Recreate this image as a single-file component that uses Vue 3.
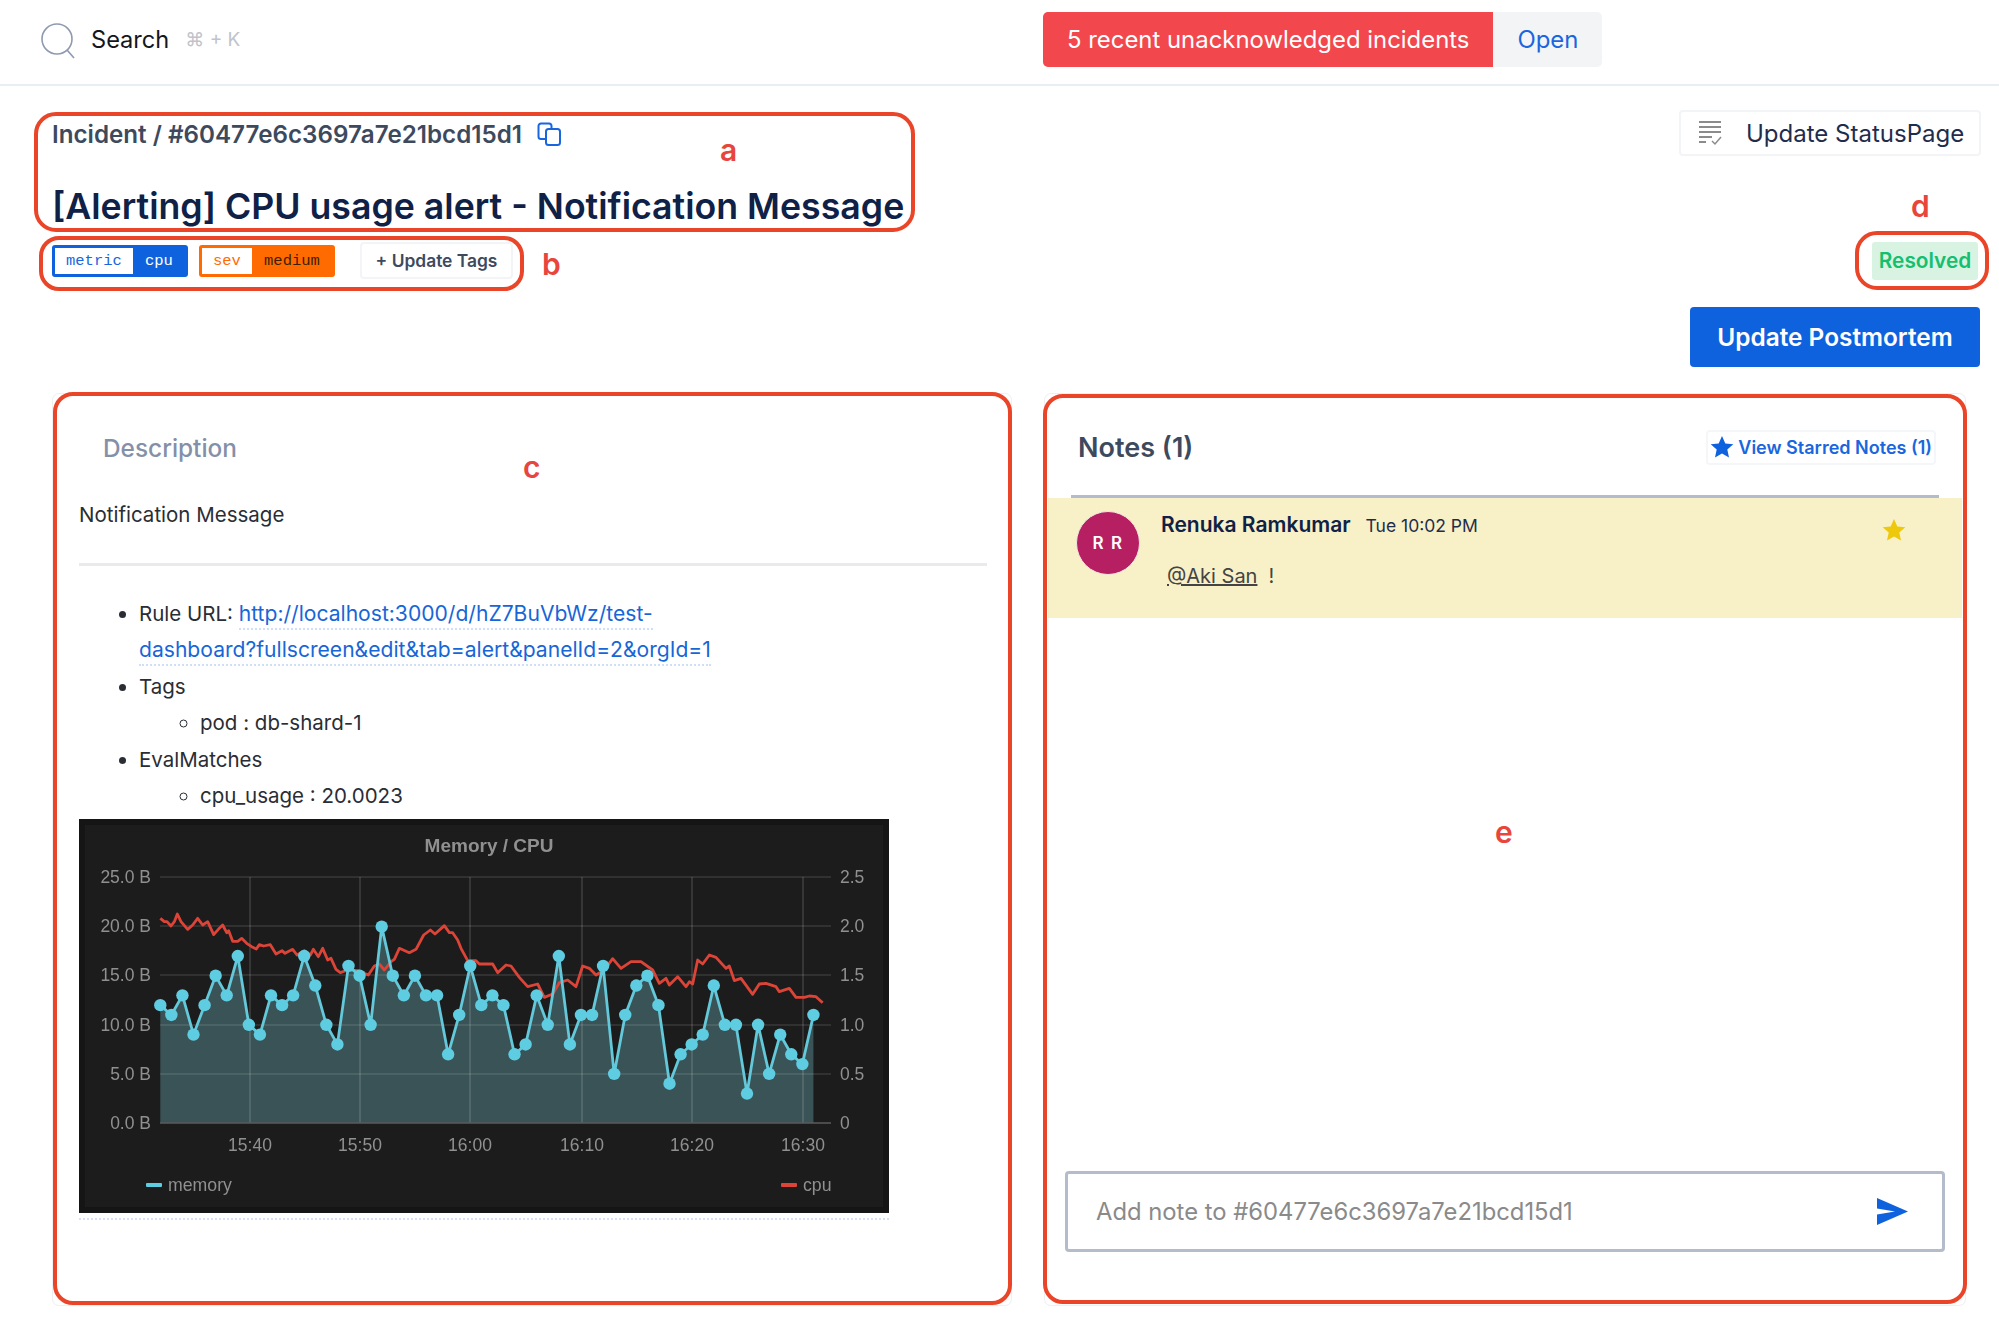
<template>
  <div class="page">
    <header class="topbar">
      <div class="search">
        <svg class="search-icon" width="36" height="36" viewBox="0 0 36 36" fill="none" stroke="#8f9ab0" stroke-width="1.6">
          <circle cx="17" cy="16" r="15" />
          <path d="M27 27l7 8" />
        </svg>
        <span class="search-label">Search</span>
        <span class="search-key">⌘ + K</span>
      </div>
      <div class="alert">
        <span class="alert-text">5 recent unacknowledged incidents</span>
        <span class="alert-open">Open</span>
      </div>
    </header>

    <section class="head">
      <div class="head-left">
        <div class="crumb">
          <span>Incident / #60477e6c3697a7e21bcd15d1</span>
          <svg width="25" height="24" viewBox="0 0 25 24" fill="none" stroke="#1a66de" stroke-width="2">
            <rect x="9" y="7" width="14" height="16" rx="2.5" />
            <path d="M9 17H4a2.500 2.500 0 0 1-2.500-2.500V4A2.500 2.500 0 0 1 4 1.500h8A2.500 2.500 0 0 1 14.500 4v3" />
          </svg>
        </div>
        <h1 class="title">[Alerting] CPU usage alert - Notification Message</h1>
        <div class="tags">
          <span v-for="tag in tags" :key="tag.name" class="tag" :class="tag.kind">
            <span class="tag-name">{{ tag.name }}</span>
            <span class="tag-value">{{ tag.value }}</span>
          </span>
          <button class="tag-btn">+ Update Tags</button>
        </div>
      </div>
      <div class="head-right">
        <button class="status-btn">
          <svg width="24" height="26" viewBox="0 0 24 26" fill="none" stroke="#8b8b8b" stroke-width="2">
            <path d="M1 2h22M1 7h22M1 12h22M1 17h13M1 22h7" />
            <path d="M14 21l3 3 6-7" stroke-width="1.500" />
          </svg>
          Update StatusPage
        </button>
        <span class="resolved">Resolved</span>
        <button class="post-btn">Update Postmortem</button>
      </div>
    </section>

    <main class="panels">
      <section class="card desc">
        <h2 class="desc-title">Description</h2>
        <p class="desc-msg">Notification Message</p>
        <hr class="desc-rule" />
        <ul class="list">
          <li>Rule URL: <a class="link">http://localhost:3000/d/hZ7BuVbWz/test-</a><br /><a class="link">dashboard?fullscreen&amp;edit&amp;tab=alert&amp;panelId=2&amp;orgId=1</a></li>
          <li>Tags
            <ul><li>pod : db-shard-1</li></ul>
          </li>
          <li>EvalMatches
            <ul><li>cpu_usage : 20.0023</li></ul>
          </li>
        </ul>
        <div class="chart-link">
          <svg class="chart" width="810" height="394" viewBox="0 0 810 394" font-family="'Liberation Sans', Arial, sans-serif" font-size="17.500" fill="#909090">
            <rect width="810" height="394" fill="#151515" />
            <rect x="6" y="6" width="798" height="382" fill="#1c1c1c" />
            <text x="410" y="33" text-anchor="middle" font-size="19" font-weight="700">Memory / CPU</text>

            <path :d="areaPath" fill="#3a5357" />
            <line v-for="g in hGrid" :key="g.y" x1="81" x2="752" :y1="g.y" :y2="g.y" stroke="#fff" stroke-opacity=".13" stroke-width="1.500" />
            <line v-for="t in xTicks" :key="t.label" :x1="t.x" :x2="t.x" y1="58" y2="304" stroke="#fff" stroke-opacity=".16" stroke-width="1.500" />
            <line x1="81" x2="752" y1="304" y2="304" stroke="#555" stroke-width="1.500" />

            <text v-for="g in hGrid" :key="'l' + g.y" x="72" :y="g.y + 6" text-anchor="end">{{ g.left }}</text>
            <text v-for="g in hGrid" :key="'r' + g.y" x="761" :y="g.y + 6">{{ g.right }}</text>
            <text v-for="t in xTicks" :key="t.label" :x="t.x" y="332" text-anchor="middle">{{ t.label }}</text>

            <polyline :points="cpuLine" fill="none" stroke="#dc4438" stroke-width="2.800" stroke-linejoin="round" />
            <polyline :points="memLine" fill="none" stroke="#63c8d9" stroke-width="2.800" />
            <circle v-for="(p, i) in memPoints" :key="i" :cx="p[0]" :cy="p[1]" r="6.200" fill="#5fcde1" />

            <rect x="67" y="364" width="16" height="4" rx="1" fill="#5fcde1" />
            <text x="89" y="372" font-size="17.700">memory</text>
            <rect x="702" y="364" width="16" height="4" rx="1" fill="#dc4438" />
            <text x="724" y="372" font-size="17.700">cpu</text>
          </svg>
        </div>
      </section>

      <section class="card notes">
        <div class="notes-head">
          <h2 class="notes-title">Notes (1)</h2>
          <button class="starred">
            <svg width="24" height="24" viewBox="0 0 24 24" fill="#0f62de"><path :d="starPath" /></svg>
            View Starred Notes (1)
          </button>
        </div>
        <div class="note">
          <div class="avatar">R R</div>
          <div class="note-body">
            <div class="note-meta">
              <span class="note-author">Renuka Ramkumar</span>
              <span class="note-time">Tue 10:02 PM</span>
            </div>
            <p class="note-text"><u>@Aki San</u><span class="note-bang">!</span></p>
          </div>
          <svg class="note-star" width="24" height="24" viewBox="0 0 24 24" fill="#eec80b"><path :d="starPath" /></svg>
        </div>
        <div class="composer">
          <span class="composer-hint">Add note to #60477e6c3697a7e21bcd15d1</span>
          <svg width="32" height="27" viewBox="0 0 32 27" fill="#0f62de">
            <path d="M1 0l31 13.500L1 27V16.500l18-3-18-3z" />
          </svg>
        </div>
      </section>
    </main>

    <!-- callouts drawn on top of the screenshot -->
    <div
      v-for="box in callouts" :key="box.id"
      class="callout"
      :style="{ left: box.x + 'px', top: box.y + 'px', width: box.w + 'px', height: box.h + 'px', borderRadius: box.r + 'px' }"
    ></div>
    <span
      v-for="mark in marks" :key="mark.text"
      class="mark"
      :style="{ left: mark.x + 'px', top: mark.y + 'px' }"
    >{{ mark.text }}</span>
  </div>
</template>

<script setup>
import { computed } from 'vue';

const tags = [
  { name: 'metric', value: 'cpu', kind: 'blue' },
  { name: 'sev', value: 'medium', kind: 'orange' },
];

const callouts = [
  { id: 'a', x: 34, y: 112, w: 881, h: 120, r: 22 },
  { id: 'b', x: 39, y: 236, w: 485, h: 55, r: 20 },
  { id: 'c', x: 53, y: 392, w: 959, h: 913, r: 20 },
  { id: 'd', x: 1855, y: 231, w: 134, h: 59, r: 22 },
  { id: 'e', x: 1043, y: 394, w: 924, h: 910, r: 20 },
];

const marks = [
  { text: 'a', x: 720, y: 130 },
  { text: 'b', x: 542, y: 244 },
  { text: 'c', x: 523, y: 447 },
  { text: 'd', x: 1911, y: 186 },
  { text: 'e', x: 1495, y: 812 },
];

const starPath = 'M12 1l3.300 7.400 8 .8-6 5.400 1.700 7.900L12 18.400 5 22.500l1.700-7.900-6-5.400 8-.8z';

const hGrid = [
  { y: 58, left: '25.0 B', right: '2.5' },
  { y: 107, left: '20.0 B', right: '2.0' },
  { y: 156, left: '15.0 B', right: '1.5' },
  { y: 206, left: '10.0 B', right: '1.0' },
  { y: 255, left: '5.0 B', right: '0.5' },
  { y: 304, left: '0.0 B', right: '0' },
];

const xTicks = [
  { x: 171, label: '15:40' },
  { x: 281, label: '15:50' },
  { x: 391, label: '16:00' },
  { x: 503, label: '16:10' },
  { x: 613, label: '16:20' },
  { x: 724, label: '16:30' },
];

const memory = [
  12, 11, 13, 9, 12, 15, 13, 17, 10, 9, 13, 12, 13, 17, 14, 10, 8, 16, 15, 10,
  20, 15, 13, 15, 13, 13, 7, 11, 16, 12, 13, 12, 7, 8, 13, 10, 17, 8, 11, 11,
  16, 5, 11, 14, 15, 12, 4, 7, 8, 9, 14, 10, 10, 3, 10, 5, 9, 7, 6, 11,
];

const memPoints = memory.map((v, i) => [81.3 + i * 11.07, 304 - v * 9.82]);
const memLine = computed(() => memPoints.map(p => p.join(',')).join(' '));
const areaPath = computed(() => {
  const last = memPoints[memPoints.length - 1][0];
  return `M81.3 304L${memPoints.map(p => p.join(' ')).join('L')}L${last} 304Z`;
});

// traced from the reference, in 3x crop pixels of the two chart halves
const cpuLeft = [
  [238, 175], [250, 185], [258, 185], [270, 198], [280, 185], [289, 162], [300, 185], [320, 208],
  [335, 195], [350, 175], [365, 195], [380, 185], [398, 224], [412, 208], [425, 195], [437, 218],
  [443, 212], [455, 244], [470, 244], [482, 235], [497, 250], [512, 260], [526, 267], [535, 254],
  [548, 258], [568, 254], [585, 282], [603, 272], [612, 280], [635, 268], [648, 285], [670, 272],
  [688, 285], [697, 268], [712, 290], [725, 265], [740, 300], [750, 295], [765, 328], [778, 338],
  [800, 330], [830, 332], [862, 345], [880, 318], [895, 312], [910, 330], [930, 305], [940, 298],
  [955, 265], [985, 278], [1005, 268], [1028, 225], [1048, 210], [1062, 222], [1090, 197],
  [1105, 218], [1115, 218], [1130, 240], [1140, 265], [1160, 302], [1185, 302], [1195, 312],
];
const cpuRight = [
  [0, 312], [35, 312], [50, 338], [75, 315], [90, 318], [115, 352], [140, 380], [170, 372],
  [190, 412], [215, 402], [235, 368], [260, 360], [285, 380], [305, 318], [325, 325], [345, 345],
  [370, 330], [395, 296], [420, 325], [450, 305], [480, 305], [515, 330], [535, 370], [555, 355],
  [565, 375], [590, 350], [615, 380], [625, 365], [635, 372], [650, 300], [665, 312], [685, 285],
  [705, 292], [735, 325], [745, 318], [760, 362], [780, 355], [815, 403], [835, 372], [855, 370],
  [885, 380], [895, 395], [925, 385], [945, 412], [970, 412], [985, 408], [1005, 410], [1025, 428],
];
const cpuLine = computed(() => [
  ...cpuLeft.map(([x, y]) => [2 + x / 3, 41 + y / 3]),
  ...cpuRight.map(([x, y]) => [402 + x / 3, 41 + y / 3]),
].map(p => p.join(',')).join(' '));
</script>

<style>
html, body { background: #fff; }
</style>

<style scoped>
.page {
  position: relative;
  width: 1999px;
  height: 1327px;
  overflow: hidden;
  font-family: Inter, 'Noto Sans', sans-serif;
  color: #0f2147;
}
h1, h2, p { margin: 0; }
button { font-family: inherit; cursor: pointer; }

.topbar {
  display: flex;
  align-items: center;
  height: 84px;
  padding-left: 40px;
  border-bottom: 2px solid #e9edf4;
}
.search {
  display: flex;
  align-items: center;
  width: 1003px;
  margin-top: -5px;
}
.search-icon { margin-top: 3px; }
.search-label { margin-left: 15px; font-size: 23.600px; color: #14161c; }
.search-key { margin-left: 16px; font-size: 19px; color: #bfc4cc; }
.alert {
  display: flex;
  height: 55px;
  font-size: 23.900px;
  line-height: 55px;
  margin-top: -6px;
}
.alert-text {
  padding: 0 24px;
  background: #f2474c;
  color: #fff;
  border-radius: 5px 0 0 5px;
}
.alert-open {
  padding: 0 24px;
  background: #f3f4f6;
  color: #1a66de;
  border-radius: 0 5px 5px 0;
}

.head {
  display: flex;
  justify-content: space-between;
  padding: 23px 18px 0 52px;
  height: 308px;
  box-sizing: border-box;
}
.crumb {
  display: flex;
  align-items: center;
  gap: 15px;
  height: 50px;
  font-size: 24.200px;
  font-weight: 600;
  color: #3d4a5e;
}
.title {
  margin-top: 25px;
  font-size: 35.700px;
  line-height: 44px;
  font-weight: 600;
  white-space: nowrap;
  color: #0f2147;
}
.tags {
  display: flex;
  align-items: center;
  gap: 11px;
  margin-top: 14px;
}
.tag {
  display: flex;
  width: 136px;
  height: 32px;
  font-family: 'Liberation Mono', monospace;
  font-size: 15.500px;
  line-height: 26px;
  border-radius: 3px;
  box-sizing: border-box;
  border: 3px solid;
}
.tag-name { padding: 0 12px; background: #fff; }
.tag-value { flex: 1; text-align: center; color: #fff; }
.tag.blue { border-color: #0f62de; background: #0f62de; }
.tag.blue .tag-name { color: #1a66de; padding: 0 11px; }
.tag.orange { border-color: #ff6b00; background: #ff6b00; }
.tag.orange .tag-name { color: #ff6b00; padding: 0 11px; }
.tag.orange .tag-value { color: #3f1e00; }
.tag-btn {
  height: 37px;
  width: 153px;
  margin-left: 14px;
  padding: 0;
  background: #fff;
  border: 2px solid #f2f4f7;
  border-radius: 4px;
  font-size: 17.400px;
  font-weight: 600;
  color: #3d4a5e;
}

.head-right {
  display: flex;
  flex-direction: column;
  align-items: flex-end;
}
.status-btn {
  display: flex;
  align-items: center;
  gap: 24px;
  width: 302px;
  height: 46px;
  margin-top: 1px;
  padding: 0 0 0 17px;
  background: #fff;
  border: 2px solid #f2f4f7;
  border-radius: 4px;
  font-size: 24px;
  color: #1f2d4d;
  white-space: nowrap;
}
.resolved {
  width: 106px;
  height: 38px;
  margin-top: 86px;
  margin-right: 3px;
  background: #d9f3e3;
  border-radius: 3px;
  color: #14c06f;
  font-size: 20.800px;
  font-weight: 600;
  line-height: 38px;
  text-align: center;
}
.post-btn {
  width: 290px;
  height: 60px;
  margin-top: 27px;
  margin-right: 1px;
  padding: 0;
  background: #0f62de;
  border: none;
  border-radius: 4px;
  color: #fff;
  font-size: 24.400px;
  font-weight: 600;
}

.panels {
  display: grid;
  grid-template-columns: 958px 920px;
  column-gap: 34px;
  padding-left: 53px;
}
.card {
  height: 911px;
  box-sizing: border-box;
  border-radius: 6px;
  box-shadow: 0 0 0 1px #eef0f4;
}
.desc { padding: 39px 24px 0 26px; }
.desc-title {
  margin-left: 24px;
  font-size: 24.400px;
  line-height: 30px;
  font-weight: 500;
  color: #8490a8;
}
.desc-msg {
  margin-top: 37px;
  font-size: 20.500px;
  line-height: 30px;
  color: #2a2d33;
}
.desc-rule {
  margin: 33px 0 0;
  border: none;
  height: 3px;
  background: #e8eaee;
}
.list {
  margin: 30px 0 0;
  padding-left: 60px;
  font-size: 20.500px;
  line-height: 36.400px;
  color: #2a2d33;
}
.list ul {
  margin: 0;
  padding-left: 61px;
  list-style: circle;
}
.link {
  color: #1766d8;
  font-size: 21.100px;
  border-bottom: 2px dotted #cfdff5;
  padding-bottom: 2px;
}
.chart-link {
  width: 810px;
  margin-top: 5px;
  padding-bottom: 5px;
  border-bottom: 2px dotted #d5e2f5;
}
.chart { display: block; filter: blur(0.5px); }

.notes {
  display: flex;
  flex-direction: column;
}
.notes-head {
  display: flex;
  align-items: center;
  justify-content: space-between;
  height: 104px;
  margin: 0 26px;
  padding: 5px 3px 0 7px;
  border-bottom: 3px solid #b4bbcb;
  box-sizing: border-box;
}
.notes-title {
  font-size: 27px;
  font-weight: 600;
  color: #3d4a5e;
}
.starred {
  display: flex;
  align-items: center;
  gap: 4px;
  height: 35px;
  padding: 0 2px;
  background: #fff;
  border: 2px solid #f4f6f9;
  border-radius: 4px;
  color: #1a66de;
  font-size: 18px;
  font-weight: 600;
  white-space: nowrap;
}
.note {
  display: flex;
  height: 120px;
  margin-left: 3px;
  margin-right: 3px;
  padding: 13px 0 0 28px;
  background: #f8f0c6;
  box-sizing: border-box;
}
.avatar {
  width: 64px;
  height: 64px;
  flex: none;
  border: 1px solid #efe9de;
  border-radius: 50%;
  background: #b71f63;
  color: #fff;
  font-size: 17px;
  font-weight: 600;
  line-height: 62px;
  text-align: center;
  letter-spacing: 1.500px;
  box-sizing: border-box;
}
.note-body { flex: 1; margin-left: 21px; }
.note-meta {
  display: flex;
  align-items: baseline;
  gap: 15px;
  line-height: 28px;
}
.note-author { font-size: 21px; font-weight: 600; color: #0f2147; }
.note-time { font-size: 17.500px; color: #1f2d4d; }
.note-text {
  margin: 21px 0 0 6px;
  font-size: 20px;
  line-height: 30px;
  color: #444;
}
.note-bang { margin-left: 11px; }
.note-star { margin: 7px 56px 0 0; }
.composer {
  display: flex;
  align-items: center;
  justify-content: space-between;
  height: 81px;
  margin: auto 20px 53px;
  padding: 0 34px 0 28px;
  border: 3px solid #b4bbcb;
  border-radius: 4px;
  box-sizing: border-box;
}
.composer-hint { font-size: 23.800px; color: #8a8a8a; }

.callout {
  position: absolute;
  border: 4px solid #ea4528;
  box-sizing: border-box;
  pointer-events: none;
}
.mark {
  position: absolute;
  font-family: Inter, sans-serif;
  font-size: 30px;
  font-weight: 600;
  line-height: 40px;
  color: #e8453c;
}
</style>
